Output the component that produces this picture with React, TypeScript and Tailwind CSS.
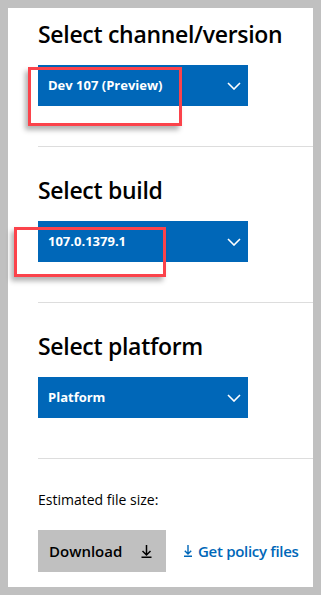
import React from 'react';

const font = "font-['Open_Sans',sans-serif]";

const Chevron: React.FC = () => (
  <svg width="14" height="8" viewBox="0 0 14 8" fill="none">
    <path d="M1 1l6 6 6-6" stroke="white" strokeWidth="1.6" />
  </svg>
);

const DownArrow: React.FC<{ color: string }> = ({ color }) => (
  <svg width="11" height="13" viewBox="0 0 11 13" fill="none">
    <path d="M5.5 0v10M1.5 6l4 4 4-4M0.5 12.2h10" stroke={color} strokeWidth="1.5" />
  </svg>
);

const LinkArrow: React.FC = () => (
  <svg width="8" height="12" viewBox="0 0 8 12" fill="none">
    <path d="M4 0v9M0.8 5.8L4 9l3.2-3.2M0 11.2h8" stroke="#0067b8" strokeWidth="1.4" />
  </svg>
);

const Dropdown: React.FC<{ label: string }> = ({ label }) => (
  <div className="w-[210px] h-[41px] bg-[#0067b8] flex items-center justify-between pl-[10px] pr-[7px]">
    <span className="text-white text-[13px] font-bold">{label}</span>
    <Chevron />
  </div>
);

const Highlight: React.FC<{ className: string }> = ({ className }) => (
  <div className={`absolute border-[3px] border-[#fb434b] shadow-[-3px_4px_5px_rgba(0,0,0,0.3)] ${className}`}></div>
);

const App: React.FC = () => {
  return (
    <div className={`w-[321px] h-[595px] bg-[#c0c0c0] p-2 ${font}`}>
      <div className="h-full bg-white pl-[30px] text-black">
        {/* Channel */}
        <section className="pt-[10px] pb-[40px] border-b border-[#dddddd]">
          <h2 className="text-[23px] leading-[32px] font-semibold tracking-[-0.3px]">Select channel/version</h2>
          <div className="relative mt-[15px]">
            <Dropdown label="Dev 107 (Preview)" />
            <Highlight className="-left-[10px] top-[2px] w-[154px] h-[59px]" />
          </div>
        </section>

        {/* Build */}
        <section className="pt-[27px] pb-[40px] border-b border-[#dddddd]">
          <h2 className="text-[23px] leading-[32px] font-semibold tracking-[-0.3px]">Select build</h2>
          <div className="relative mt-[15px]">
            <Dropdown label="107.0.1379.1" />
            <Highlight className="-left-[24px] top-[6px] w-[152px] h-[50px]" />
          </div>
        </section>

        {/* Platform */}
        <section className="pt-[27px] pb-[40px] border-b border-[#dddddd]">
          <h2 className="text-[23px] leading-[32px] font-semibold tracking-[-0.3px]">Select platform</h2>
          <div className="mt-[15px]">
            <Dropdown label="Platform" />
          </div>
        </section>

        <p className="mt-[31px] text-[14px] leading-[20px]">Estimated file size:</p>

        <div className="mt-[20px] flex items-center">
          <button className="w-[128px] h-[42px] bg-[#c0c0c0] flex items-center justify-between pl-[11px] pr-[14px]">
            <span className="text-[15px] font-semibold">Download</span>
            <DownArrow color="#000" />
          </button>
          <a className="ml-[18px] flex items-center gap-[6px] text-[#0067b8] text-[15px] font-semibold tracking-[-0.3px]">
            <LinkArrow />
            Get policy files
          </a>
        </div>
      </div>
    </div>
  );
};

export default App;
